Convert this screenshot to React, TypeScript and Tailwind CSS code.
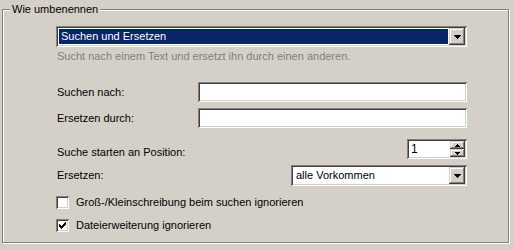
import React from "react";

const sunken =
  "shadow-[inset_1px_1px_0_#808080,inset_-1px_-1px_0_#ffffff,inset_2px_2px_0_#404040,inset_-2px_-2px_0_#d4d0c8]";
const raised =
  "shadow-[inset_-1px_-1px_0_#404040,inset_1px_1px_0_#d4d0c8,inset_-2px_-2px_0_#808080,inset_2px_2px_0_#ffffff]";

const Arrow = ({ small = false }: { small?: boolean }) =>
  small ? (
    <svg width="5" height="3" viewBox="0 0 5 3">
      <path d="M0 0h5v1H0zM1 1h3v1H1zM2 2h1v1H2z" fill="#000" />
    </svg>
  ) : (
    <svg width="7" height="4" viewBox="0 0 7 4">
      <path d="M0 0h7v1H0zM1 1h5v1H1zM2 2h3v1H2zM3 3h1v1H3z" fill="#000" />
    </svg>
  );

const Combo = ({ value, selected = false, width }: { value: string; selected?: boolean; width: string }) => (
  <div className={`relative flex h-[21px] bg-white p-[2px] ${sunken} ${width}`}>
    <div className="flex-1 p-[1px] pr-[1px]">
      <div
        className={`h-full pl-[2px] leading-[15px] ${selected ? "bg-[#0a246a] text-white" : "text-black"}`}
      >
        {value}
      </div>
    </div>
    <div className={`flex h-[17px] w-[16px] items-center justify-center bg-[#d4d0c8] ${raised}`}>
      <Arrow />
    </div>
  </div>
);

const Check = ({ checked, label }: { checked: boolean; label: string }) => (
  <div className="flex h-[13px] items-center">
    <div className={`flex h-[13px] w-[13px] items-center justify-center bg-white ${sunken}`}>
      {checked && (
        <svg width="7" height="7" viewBox="0 0 7 7">
          <path d="M0 2h1v3H0zM1 3h1v3H1zM2 4h1v3H2zM3 3h1v3H3zM4 2h1v3H4zM5 1h1v3H5zM6 0h1v3H6z" fill="#000" />
        </svg>
      )}
    </div>
    <span className="ml-[7px]">{label}</span>
  </div>
);

export default function App() {
  return (
    <div
      className="relative h-[250px] w-[514px] overflow-hidden bg-[#d4d0c8] pl-[2px] pt-[9px] text-[11px] leading-[13px] text-black"
      style={{ fontFamily: '"Liberation Sans", Arial, sans-serif' }}
    >
      <div className="h-[234px] w-[507px] border border-[#808080] pl-[53px] pt-[16px] shadow-[inset_1px_1px_0_#ffffff,1px_1px_0_#ffffff]">
        <div className="absolute left-[10px] top-[2px] bg-[#d4d0c8] px-[2px] leading-[14px]">Wie umbenennen</div>

        <div className="flex w-[411px] flex-col">
          <Combo value="Suchen und Ersetzen" selected width="w-[411px]" />
          <div className="mt-[3px] pl-[1px] text-[#808080]">
            Sucht nach einem Text und ersetzt ihn durch einen anderen.
          </div>

          <div className="mt-[19px] flex h-[20px] items-center justify-between">
            <span className="pl-[1px]">Suchen nach:</span>
            <div className={`h-[20px] w-[269px] bg-white ${sunken}`} />
          </div>
          <div className="mt-[6px] flex h-[20px] items-center justify-between">
            <span className="pl-[1px]">Ersetzen durch:</span>
            <div className={`h-[20px] w-[269px] bg-white ${sunken}`} />
          </div>

          <div className="mt-[11px] flex h-[20px] items-end justify-between">
            <span className="pl-[1px] leading-[13px]">Suche starten an Position:</span>
            <div className={`flex h-[20px] w-[60px] bg-white p-[2px] ${sunken}`}>
              <span className="flex-1 pl-[2px] text-[12px] leading-[16px]">1</span>
              <div className="flex w-[15px] flex-col">
                <div className={`flex h-[8px] items-center justify-center bg-[#d4d0c8] ${raised}`}>
                  <svg width="5" height="3" viewBox="0 0 5 3">
                    <path d="M2 0h1v1H2zM1 1h3v1H1zM0 2h5v1H0z" fill="#000" />
                  </svg>
                </div>
                <div className={`flex h-[8px] items-center justify-center bg-[#d4d0c8] ${raised}`}>
                  <Arrow small />
                </div>
              </div>
            </div>
          </div>

          <div className="mt-[6px] flex h-[21px] items-center justify-between">
            <span className="pl-[1px]">Ersetzen:</span>
            <Combo value="alle Vorkommen" width="w-[176px]" />
          </div>

          <div className="mt-[10px] flex flex-col gap-[10px]">
            <Check checked={false} label="Groß-/Kleinschreibung beim suchen ignorieren" />
            <Check checked label="Dateierweiterung ignorieren" />
          </div>
        </div>
      </div>
    </div>
  );
}
